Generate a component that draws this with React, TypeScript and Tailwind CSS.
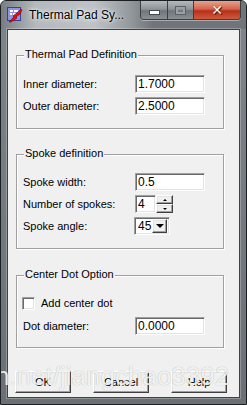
const Label = ({ text }: { text: string }) => (
  <span className="w-[112px] shrink-0 text-[11px] text-black leading-none">{text}</span>
)

const Field = ({ value, width = 'w-[70px]' }: { value: string; width?: string }) => (
  <div
    className={`${width} h-[18px] bg-white border border-t-[#a0a0a0] border-l-[#a0a0a0] border-r-white border-b-white shadow-[inset_1px_1px_0_#696969,inset_-1px_-1px_0_#e3e3e3] flex items-center pl-[2px] text-[12px] text-black leading-none`}
  >
    {value}
  </div>
)

const Raised = ({ className, children }: { className: string; children?: React.ReactNode }) => (
  <div
    className={`${className} bg-[#f0f0f0] border border-t-white border-l-white border-r-[#404040] border-b-[#404040] shadow-[inset_-1px_-1px_0_#a0a0a0,inset_1px_1px_0_#e3e3e3] flex items-center justify-center`}
  >
    {children}
  </div>
)

const Group = ({ title, height, children }: { title: string; height: string; children: React.ReactNode }) => (
  <div
    className={`relative w-[208px] ${height} border border-[#a0a0a0] shadow-[inset_1px_1px_0_#fff,1px_1px_0_#fff] pl-[6px]`}
  >
    <span className="absolute left-[7px] top-[-7px] bg-[#f0f0f0] px-[1px] text-[11px] leading-none text-black">
      {title}
    </span>
    {children}
  </div>
)

const Row = ({ children }: { children: React.ReactNode }) => (
  <div className="flex items-center h-[18px]">{children}</div>
)

const TitleIcon = () => (
  <svg width="16" height="16" viewBox="0 0 16 16">
    <rect x="0.5" y="0.5" width="13" height="13" fill="#8e94e4" stroke="#3b3f92" />
    <rect x="3" y="3" width="3" height="2" fill="#fff" />
    <rect x="7" y="3" width="4" height="2" fill="#fff" />
    <rect x="3" y="6" width="2" height="2" fill="#fff" />
    <rect x="6" y="6" width="3" height="2" fill="#fff" />
    <path d="M2 15 L7 10 L6 9 L11 5 L14 2 L15 3 L13 7 L9 10 L10 11 L4 15 Z" fill="#e01010" stroke="#7a0000" strokeWidth="0.6" />
  </svg>
)

const WindowButtons = () => (
  <div className="flex h-[19px] ml-auto mr-[5px] rounded-b-[4px] border border-t-0 border-[#3a3f43] overflow-hidden shadow-[0_1px_0_rgba(255,255,255,0.4)]">
    <div className="w-[27px] h-full bg-[linear-gradient(180deg,#b4b9bd_0%,#8e9499_45%,#6f757a_55%,#8a9095_100%)] border-r border-[#3a3f43] flex items-center justify-center">
      <div className="w-[9px] h-[3px] bg-white border border-[#44494d] mt-[4px] box-content" />
    </div>
    <div className="w-[26px] h-full bg-[linear-gradient(180deg,#b4b9bd_0%,#8e9499_45%,#6f757a_55%,#8a9095_100%)] border-r border-[#3a3f43] flex items-center justify-center">
      <div className="w-[9px] h-[7px] border-2 border-[#9aa0a4] outline outline-1 outline-[#5b6064]" />
    </div>
    <div className="w-[46px] h-full bg-[linear-gradient(180deg,#e9a08f_0%,#d3644b_45%,#b7301a_55%,#cf5a3c_100%)] flex items-center justify-center">
      <span className="text-white text-[14px] font-bold leading-none font-['DejaVu_Sans',sans-serif] [text-shadow:0_0_1px_#3a0a00,1px_1px_0_#5a1a0a]">
        ✕
      </span>
    </div>
  </div>
)

export default function App() {
  return (
    <div className="relative w-[247px] h-[405px] overflow-hidden bg-[linear-gradient(180deg,#7f858a,#6a7075)] border border-[#1c1f22] rounded-t-[6px] flex flex-col font-['Liberation_Sans',Arial,sans-serif]">
      <div className="h-[28px] flex items-start bg-[linear-gradient(90deg,#777d82_0%,#b4b9bd_14%,#bfc3c7_38%,#959b9f_52%,#6f757a_62%,#6f757a_100%)]">
        <div className="flex items-center pl-[6px] pt-[6px] gap-[6px]">
          <TitleIcon />
          <span className="text-[12px] text-black leading-none [text-shadow:0_0_6px_#fff,0_0_3px_#fff]">Thermal Pad Sy...</span>
        </div>
        <WindowButtons />
      </div>

      <div className="mx-[6px] mb-[6px] flex-1 border border-[#3d4246] bg-[#f0f0f0] pl-[8px] flex flex-col shadow-[0_0_0_1px_rgba(255,255,255,0.25)]">
        <div className="mt-[25px]">
          <Group title="Thermal Pad Definition" height="h-[74px]">
            <div className="pt-[19px] flex flex-col gap-[4px]">
              <Row>
                <Label text="Inner diameter:" />
                <Field value="1.7000" />
              </Row>
              <Row>
                <Label text="Outer diameter:" />
                <Field value="2.5000" />
              </Row>
            </div>
          </Group>
        </div>

        <div className="mt-[25px]">
          <Group title="Spoke definition" height="h-[95px]">
            <div className="pt-[18px] flex flex-col gap-[4px]">
              <Row>
                <Label text="Spoke width:" />
                <Field value="0.5" />
              </Row>
              <Row>
                <Label text="Number of spokes:" />
                <Field value="4" width="w-[21px]" />
                <div className="flex flex-col w-[17px] h-[18px]">
                  <Raised className="h-[9px] w-full">
                    <div className="w-0 h-0 border-l-[2px] border-r-[2px] border-b-[2px] border-l-transparent border-r-transparent border-b-black" />
                  </Raised>
                  <Raised className="h-[9px] w-full">
                    <div className="w-0 h-0 border-l-[2px] border-r-[2px] border-t-[2px] border-l-transparent border-r-transparent border-t-black" />
                  </Raised>
                </div>
              </Row>
              <Row>
                <Label text="Spoke angle:" />
                <div className="-ml-[1px] w-[36px] h-[18px] bg-white border border-t-[#a0a0a0] border-l-[#a0a0a0] border-r-white border-b-white shadow-[inset_1px_1px_0_#696969,inset_-1px_-1px_0_#e3e3e3] flex items-center p-[2px]">
                  <span className="flex-1 text-[12px] leading-none pl-[1px]">45</span>
                  <Raised className="w-[15px] h-[14px]">
                    <div className="w-0 h-0 border-l-[4px] border-r-[4px] border-t-[4px] border-l-transparent border-r-transparent border-t-black" />
                  </Raised>
                </div>
              </Row>
            </div>
          </Group>
        </div>

        <div className="mt-[26px]">
          <Group title="Center Dot Option" height="h-[73px]">
            <div className="pt-[18px] flex flex-col gap-[5px]">
              <div className="flex items-center h-[18px] -ml-[1px] gap-[6px]">
                <div className="w-[13px] h-[13px] bg-white border border-t-[#a0a0a0] border-l-[#a0a0a0] border-r-white border-b-white shadow-[inset_1px_1px_0_#696969,inset_-1px_-1px_0_#e3e3e3]" />
                <span className="text-[11px] leading-none text-black">Add center dot</span>
              </div>
              <Row>
                <Label text="Dot diameter:" />
                <Field value="0.0000" />
              </Row>
            </div>
          </Group>
        </div>

        <div className="mt-[23px] flex gap-[22px] -ml-[1px]">
          <Raised className="w-[56px] h-[22px]">
            <span className="text-[11px] leading-none text-black">OK</span>
          </Raised>
          <Raised className="w-[56px] h-[22px]">
            <span className="text-[11px] leading-none text-black">Cancel</span>
          </Raised>
          <Raised className="w-[56px] h-[22px]">
            <span className="text-[11px] leading-none text-black">Help</span>
          </Raised>
        </div>
      </div>

      <span className="absolute left-[-6px] top-[362px] text-[26px] leading-none text-white/85 whitespace-nowrap pointer-events-none [text-shadow:0_0_1px_rgba(0,0,0,0.35)]">
        n.net/jiangchao3392
      </span>
    </div>
  )
}
